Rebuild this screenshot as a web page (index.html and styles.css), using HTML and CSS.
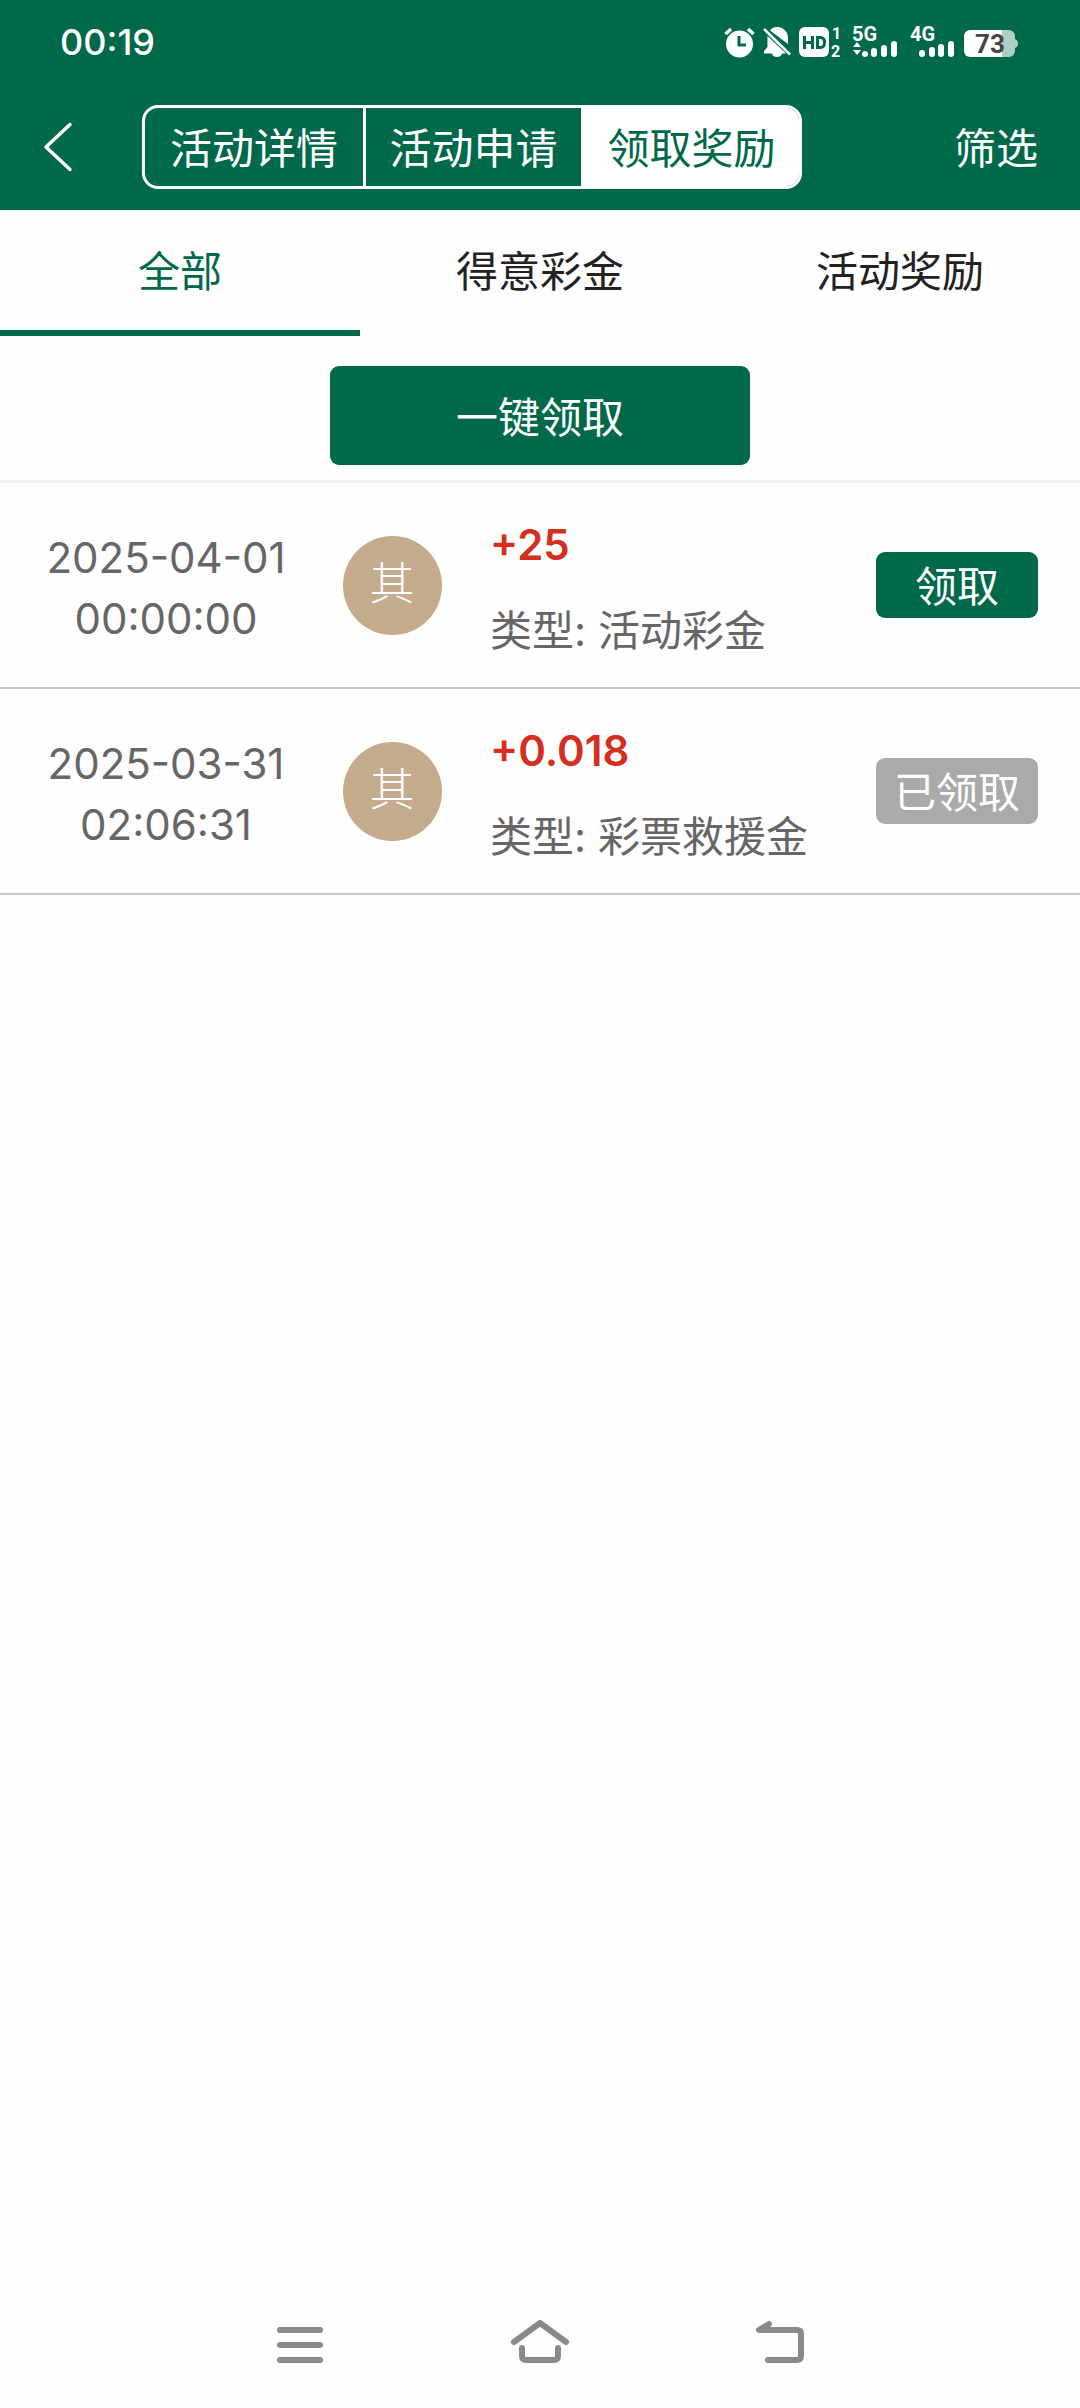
FILE: index.html
```html
<!DOCTYPE html>
<html lang="zh-CN">
<head>
<meta charset="utf-8">
<meta name="viewport" content="width=device-width, initial-scale=1">
<title>领取奖励</title>
<link rel="stylesheet" href="styles.css">
</head>
<body>
<header class="top">
  <div class="status">
    <time class="clock">00:19</time>
    <svg class="status-icons" width="296" height="44" viewBox="0 -6 296 44" aria-hidden="true">
      <g fill="#fff">
        <circle cx="15.500" cy="18" r="13.500"/>
        <path d="M1.500 8 7 3M24 3l5.500 5" stroke="#fff" stroke-width="3.500"/>
        <path d="M15 10v9h7" fill="none" stroke="#00694a" stroke-width="3"/>
        <path d="M46 4.500C47 2.500 50 1 53 1c6 0 11 4 11 11v6zM43.500 10 62 27.500h-4c-.5 2-2 3.500-5 3.500s-4.500-1.500-5-3.500h-8V25l3.500-4z"/>
        <path d="m40 3 26 25.500" stroke="#fff" stroke-width="2.500"/>
        <rect x="75" y="1" width="30" height="30" rx="6"/>
        <path d="M80.500 10v13M88.500 10v13M80.500 16.500h8M93.500 11.500h3q4 0 4 5t-4 5h-3z" fill="none" stroke="#00694a" stroke-width="3"/>
        <path d="M133 16l4 5h-8zM133 29l-4-5h8z"/>
        <rect x="138" y="25" width="6" height="6" rx="3"/><rect x="147" y="22" width="6" height="9" rx="3"/><rect x="157" y="19" width="6" height="12" rx="3"/><rect x="167" y="15" width="6" height="16" rx="3"/>
        <rect x="195" y="24" width="6" height="7" rx="3"/><rect x="205" y="21" width="6" height="10" rx="3"/><rect x="214" y="18" width="6" height="13" rx="3"/><rect x="224" y="15" width="6" height="16" rx="3"/>
        <path d="M246 4h32v27h-32a6 6 0 0 1-6-6V10a6 6 0 0 1 6-6z"/>
        <path d="M278 4h7a6 6 0 0 1 6 6v3q3 1 3 4.500t-3 4.500v3a6 6 0 0 1-6 6h-7z" opacity=".68"/>
      </g>
      <g class="status-text">
        <text x="108" y="13" font-size="16">1</text>
        <text x="107" y="31" font-size="16">2</text>
        <text x="128" y="15" font-size="20">5G</text>
        <text x="186" y="15" font-size="20">4G</text>
        <text x="251" y="27" font-size="26" class="battery">73</text>
      </g>
    </svg>
  </div>
  <nav class="bar">
    <button class="back" aria-label="返回">
      <svg width="32" height="50" viewBox="0 0 32 50"><path d="M28 2.500 4 25l24 22.500" fill="none" stroke="#fff" stroke-width="3.500" stroke-linecap="round" stroke-linejoin="round"/></svg>
    </button>
    <div class="segments">
      <button>活动详情</button>
      <button>活动申请</button>
      <button class="on">领取奖励</button>
    </div>
    <button class="filter">筛选</button>
  </nav>
</header>
<main>
  <div class="tabs">
    <button class="on">全部</button>
    <button>得意彩金</button>
    <button>活动奖励</button>
  </div>
  <div class="claim-all"><button>一键领取</button></div>
  <ul class="rewards">
    <li>
      <time class="date">2025-04-01<br>00:00:00</time>
      <span class="badge">其</span>
      <div class="info"><strong>+25</strong><span>类型: 活动彩金</span></div>
      <button class="claim">领取</button>
    </li>
    <li>
      <time class="date">2025-03-31<br>02:06:31</time>
      <span class="badge">其</span>
      <div class="info"><strong>+0.018</strong><span>类型: 彩票救援金</span></div>
      <button class="claim" disabled>已领取</button>
    </li>
  </ul>
</main>
<footer class="system">
  <button aria-label="菜单"><svg width="60" height="50" viewBox="0 0 60 50"><path d="M10 10h40M10 25h40M10 40h40"/></svg></button>
  <button aria-label="主页"><svg width="60" height="50" viewBox="0 0 60 50"><path d="M4 22 30 3l26 19M12 28v8q0 4 4 4h28q4 0 4-4v-8"/></svg></button>
  <button aria-label="返回"><svg width="60" height="50" viewBox="0 0 60 50"><path d="M19 4 9 10h38q4 0 4 4v22q0 4-4 4H18"/></svg></button>
</footer>
</body>
</html>
```
FILE: styles.css
```css
:root {
  --green: #00694a;
  --paper: #fefefe;
}

* {
  box-sizing: border-box;
}

body {
  margin: 0;
  min-height: 100vh;
  display: flex;
  flex-direction: column;
  background: var(--paper);
  color: #222;
  font: 42px/60px Inter, "Noto Sans CJK SC", sans-serif;
}

button {
  margin: 0;
  padding: 4px 0 0;
  border: 0;
  background: none;
  color: inherit;
  font: inherit;
}

svg {
  display: block;
}

.top {
  background: var(--green);
  color: #fff;
}

.status {
  display: flex;
  align-items: center;
  justify-content: space-between;
  height: 84px;
  padding: 0 60px;
}

.clock {
  font-size: 36px;
  font-weight: 500;
}

.status-text {
  fill: #fff;
  font-family: Roboto, sans-serif;
  font-weight: 700;
}

.status-text .battery {
  fill: #444;
}

.bar {
  display: flex;
  align-items: center;
  height: 126px;
  padding: 0 42px;
}

.back {
  width: 100px;
  padding: 0;
}

.segments {
  display: grid;
  grid-template-columns: repeat(3, 1fr);
  width: 660px;
  height: 84px;
  border: 3px solid #fff;
  border-radius: 16px;
  overflow: hidden;
}

.segments button + button {
  border-left: 3px solid #fff;
}

.segments .on {
  background: #fff;
  color: var(--green);
}

.filter {
  margin-left: auto;
}

.tabs {
  display: grid;
  grid-template-columns: repeat(3, 1fr);
  height: 126px;
}

.tabs button {
  border-bottom: 6px solid transparent;
}

.tabs .on {
  border-color: var(--green);
  color: var(--green);
}

.claim-all {
  display: flex;
  justify-content: center;
  padding: 30px 0 15px;
  border-bottom: 3px solid #f3f3f3;
}

.claim-all button {
  width: 420px;
  height: 99px;
  border-radius: 9px;
  background: var(--green);
  color: #fff;
}

.rewards {
  margin: 0;
  padding: 0;
  list-style: none;
}

.rewards li {
  display: grid;
  grid-template-columns: 332px 120px 1fr 162px;
  align-items: center;
  height: 206px;
  padding-right: 42px;
  border-bottom: 2px solid #c8c8c8;
}

.date {
  padding-top: 6px;
  color: #666;
  line-height: 61px;
  text-align: center;
}

.badge {
  justify-self: center;
  width: 99px;
  height: 99px;
  border-radius: 50%;
  background: #c3ab8b;
  color: #fff;
  font-size: 45px;
  font-weight: 300;
  line-height: 96px;
  text-align: center;
}

.info {
  display: grid;
  gap: 26px;
  padding: 6px 0 0 38px;
  color: #666;
}

.info strong {
  color: #d52f20;
  font-weight: 600;
}

.claim {
  height: 66px;
  border-radius: 9px;
  background: var(--green);
  color: #fff;
}

.claim:disabled {
  background: #aaa;
}

.system {
  display: flex;
  justify-content: center;
  gap: 180px;
  margin-top: auto;
  padding: 38px 0;
}

.system button {
  padding: 0;
}

.system path {
  fill: none;
  stroke: #8a8a8a;
  stroke-width: 6;
  stroke-linecap: round;
  stroke-linejoin: round;
}
```
